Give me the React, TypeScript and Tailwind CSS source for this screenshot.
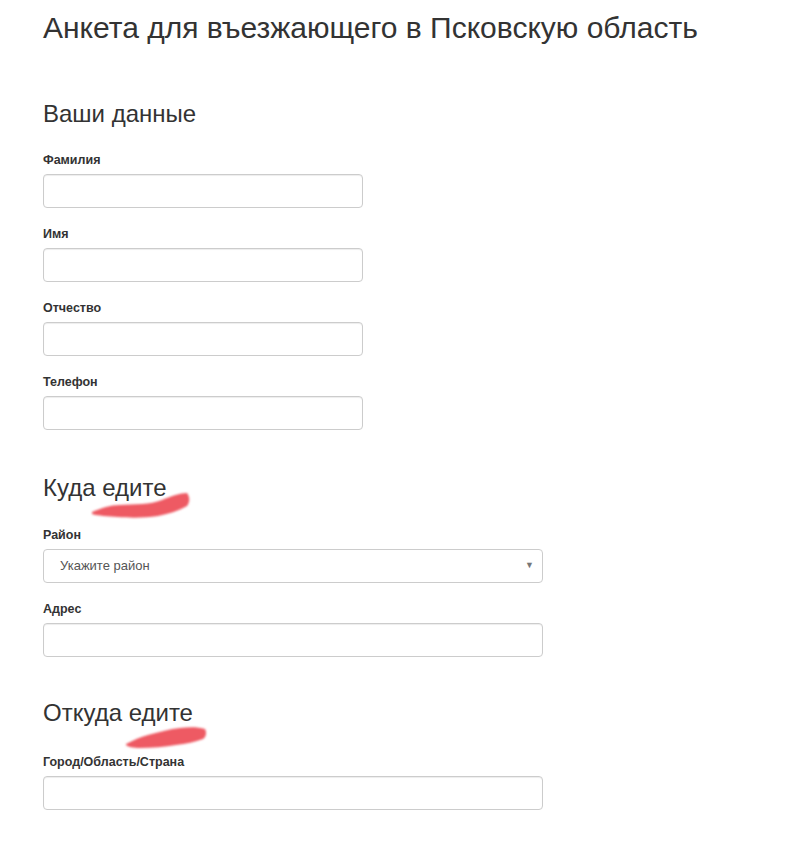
import React from "react";

const font = { fontFamily: '"Liberation Sans", Arial, sans-serif' };

const labelCls = "block h-[19px] pt-[2px] text-[12.5px] leading-[17px] font-bold text-[#333] mb-[5px]";

function Field({ label, wide }: { label: string; wide?: boolean }) {
  return (
    <div className="mb-[16px]">
      <label className={labelCls}>{label}</label>
      <input
        type="text"
        className={`block h-[34px] ${wide ? "w-[500px]" : "w-[320px]"} rounded-[4px] border border-[#ccc] bg-white px-3 text-[13px] text-[#555] shadow-[inset_0_1px_1px_rgba(0,0,0,0.075)] outline-none`}
      />
    </div>
  );
}

export default function App() {
  return (
    <div className="relative min-h-[841px] w-[801px] bg-white text-[#333]" style={font}>
      <div className="pl-[43px] pt-[10px]">
        <h1 className="text-[30px] leading-[36px] font-normal">Анкета для въезжающего в Псковскую область</h1>

        <h3 className="mt-[54px] text-[24px] leading-[28px] font-normal">Ваши данные</h3>
        <div className="mt-[22px]">
          <Field label="Фамилия" />
          <Field label="Имя" />
          <Field label="Отчество" />
          <Field label="Телефон" />
        </div>

        <h3 className="mt-[44px] text-[24px] leading-[28px] font-normal">Куда едите</h3>
        <div className="mt-[23px]">
          <div className="mb-[16px]">
            <label className={labelCls}>Район</label>
            <div className="flex h-[34px] w-[500px] items-center justify-between rounded-[4px] border border-[#ccc] bg-white pl-[16px] pr-[8px]">
              <span className="text-[13px] text-[#555]">Укажите район</span>
              <span className="text-[9px] text-[#777]">▼</span>
            </div>
          </div>
          <Field label="Адрес" wide />
        </div>

        <h3 className="mt-[42px] text-[24px] leading-[28px] font-normal">Откуда едите</h3>
        <div className="mt-[25px]">
          <Field label="Город/Область/Страна" wide />
        </div>
      </div>

      <svg className="pointer-events-none absolute left-0 top-0" width="801" height="841">
        <defs>
          <filter id="soft" x="-20%" y="-50%" width="140%" height="200%">
            <feGaussianBlur stdDeviation="1.3" />
          </filter>
        </defs>
        <path
          d="M92 512 C102 508 110 505 120 505 C135 504 150 505 162 500 C172 496 180 493 187 493 C190 497 190 502 187 506 C178 511 168 514 158 516 C145 518 130 518 118 517 C108 516 98 516 92 514 Z"
          fill="#ee5a63"
          filter="url(#soft)"
        />
        <path
          d="M126 744 C134 740 140 737 148 735 C160 732 170 729 180 728 C190 727 198 727 205 729 C207 733 206 737 203 739 C195 742 186 744 176 745 C165 747 152 748 140 748 C133 748 128 747 126 745 Z"
          fill="#ee5a63"
          filter="url(#soft)"
        />
      </svg>
    </div>
  );
}
